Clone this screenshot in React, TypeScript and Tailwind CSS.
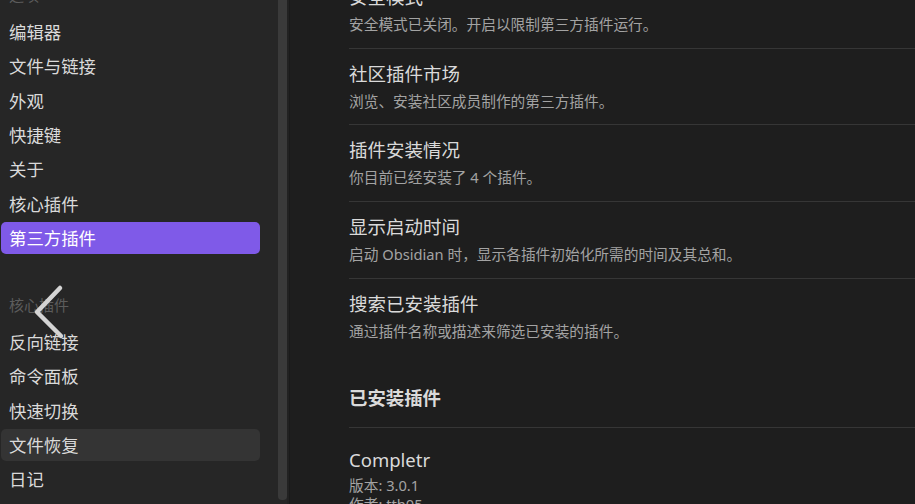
import React from 'react';

const font = { fontFamily: '"Noto Sans", "Noto Sans CJK SC", sans-serif' };

interface NavGroup {
  title: string;
  items: string[];
}

const groups: NavGroup[] = [
  { title: '选项', items: ['编辑器', '文件与链接', '外观', '快捷键', '关于', '核心插件', '第三方插件'] },
  { title: '核心插件', items: ['反向链接', '命令面板', '快速切换', '文件恢复', '日记'] },
];

const settings = [
  { name: '安全模式', desc: '安全模式已关闭。开启以限制第三方插件运行。' },
  { name: '社区插件市场', desc: '浏览、安装社区成员制作的第三方插件。' },
  { name: '插件安装情况', desc: '你目前已经安装了 4 个插件。' },
  { name: '显示启动时间', desc: '启动 Obsidian 时，显示各插件初始化所需的时间及其总和。' },
  { name: '搜索已安装插件', desc: '通过插件名称或描述来筛选已安装的插件。' },
];

const App: React.FC = () => {
  return (
    <div className="w-[915px] h-[504px] overflow-hidden flex bg-[#1e1e1e] relative" style={font}>
      {/* Sidebar */}
      <div className="w-[290px] h-full flex bg-[#262626] shrink-0">
        <div className="w-[278px] pl-[1px] pr-[18px] mt-[-26px] flex flex-col gap-[30px]">
          {groups.map((group) => (
            <div key={group.title} className="flex flex-col">
              <div className="h-[42px] flex items-center px-2 text-[15px] text-[#5c5c5c]">{group.title}</div>
              <div className="flex flex-col gap-[2.33px]">
                {group.items.map((item) => (
                  <div
                    key={item}
                    className={`h-8 flex items-center px-2 rounded-[5px] text-[17.4px] ${
                      item === '第三方插件' && group.title === '选项'
                        ? 'bg-[#7f5ae8] text-white'
                        : item === '文件恢复'
                        ? 'bg-[#343434] text-[#dadada]'
                        : 'text-[#dadada]'
                    }`}
                  >
                    {item}
                  </div>
                ))}
              </div>
            </div>
          ))}
        </div>
        {/* Scrollbar */}
        <div className="w-[12px] h-full flex border-r border-[#1a1a1a]">
          <div className="w-[9px] h-[500px] rounded-b-[4px] bg-[#3a3a3a]" />
          <div className="w-[2px] h-full bg-[#222222]" />
        </div>
      </div>

      {/* Main content */}
      <div className="flex-1 pl-[59px] mt-[-28px]">
        {settings.map((s, i) => (
          <div
            key={s.name}
            className={`pt-[15px] pb-[13.7px] ${i < settings.length - 1 ? 'border-b border-[#363636]' : ''}`}
          >
            <div className="text-[18.5px] leading-[20px] text-[#dadada]">{s.name}</div>
            <div className="mt-[7px] text-[14.7px] leading-[20px] text-[#a3a3a3]">{s.desc}</div>
          </div>
        ))}
        <div className="mt-[34px] pb-[19px] border-b border-[#363636] text-[18.4px] leading-[20px] font-bold text-[#dadada]">
          已安装插件
        </div>
        <div className="pt-[22px]">
          <div className="text-[18.5px] leading-[20px] text-[#dadada]">Completr</div>
          <div className="mt-[6px] text-[14.7px] leading-[19px] text-[#a3a3a3]">版本: 3.0.1</div>
          <div className="text-[14.7px] leading-[19px] text-[#a3a3a3]">作者: tth05</div>
        </div>
      </div>

      {/* Back chevron overlay */}
      <svg
        className="absolute left-[29px] top-[281px]"
        width="40"
        height="62"
        viewBox="0 0 40 62"
        fill="none"
      >
        <path d="M31 7 L8 31 L32 55" stroke="#d4d4d4" strokeWidth="4.5" strokeLinecap="round" strokeLinejoin="round" />
      </svg>
    </div>
  );
};

export default App;
